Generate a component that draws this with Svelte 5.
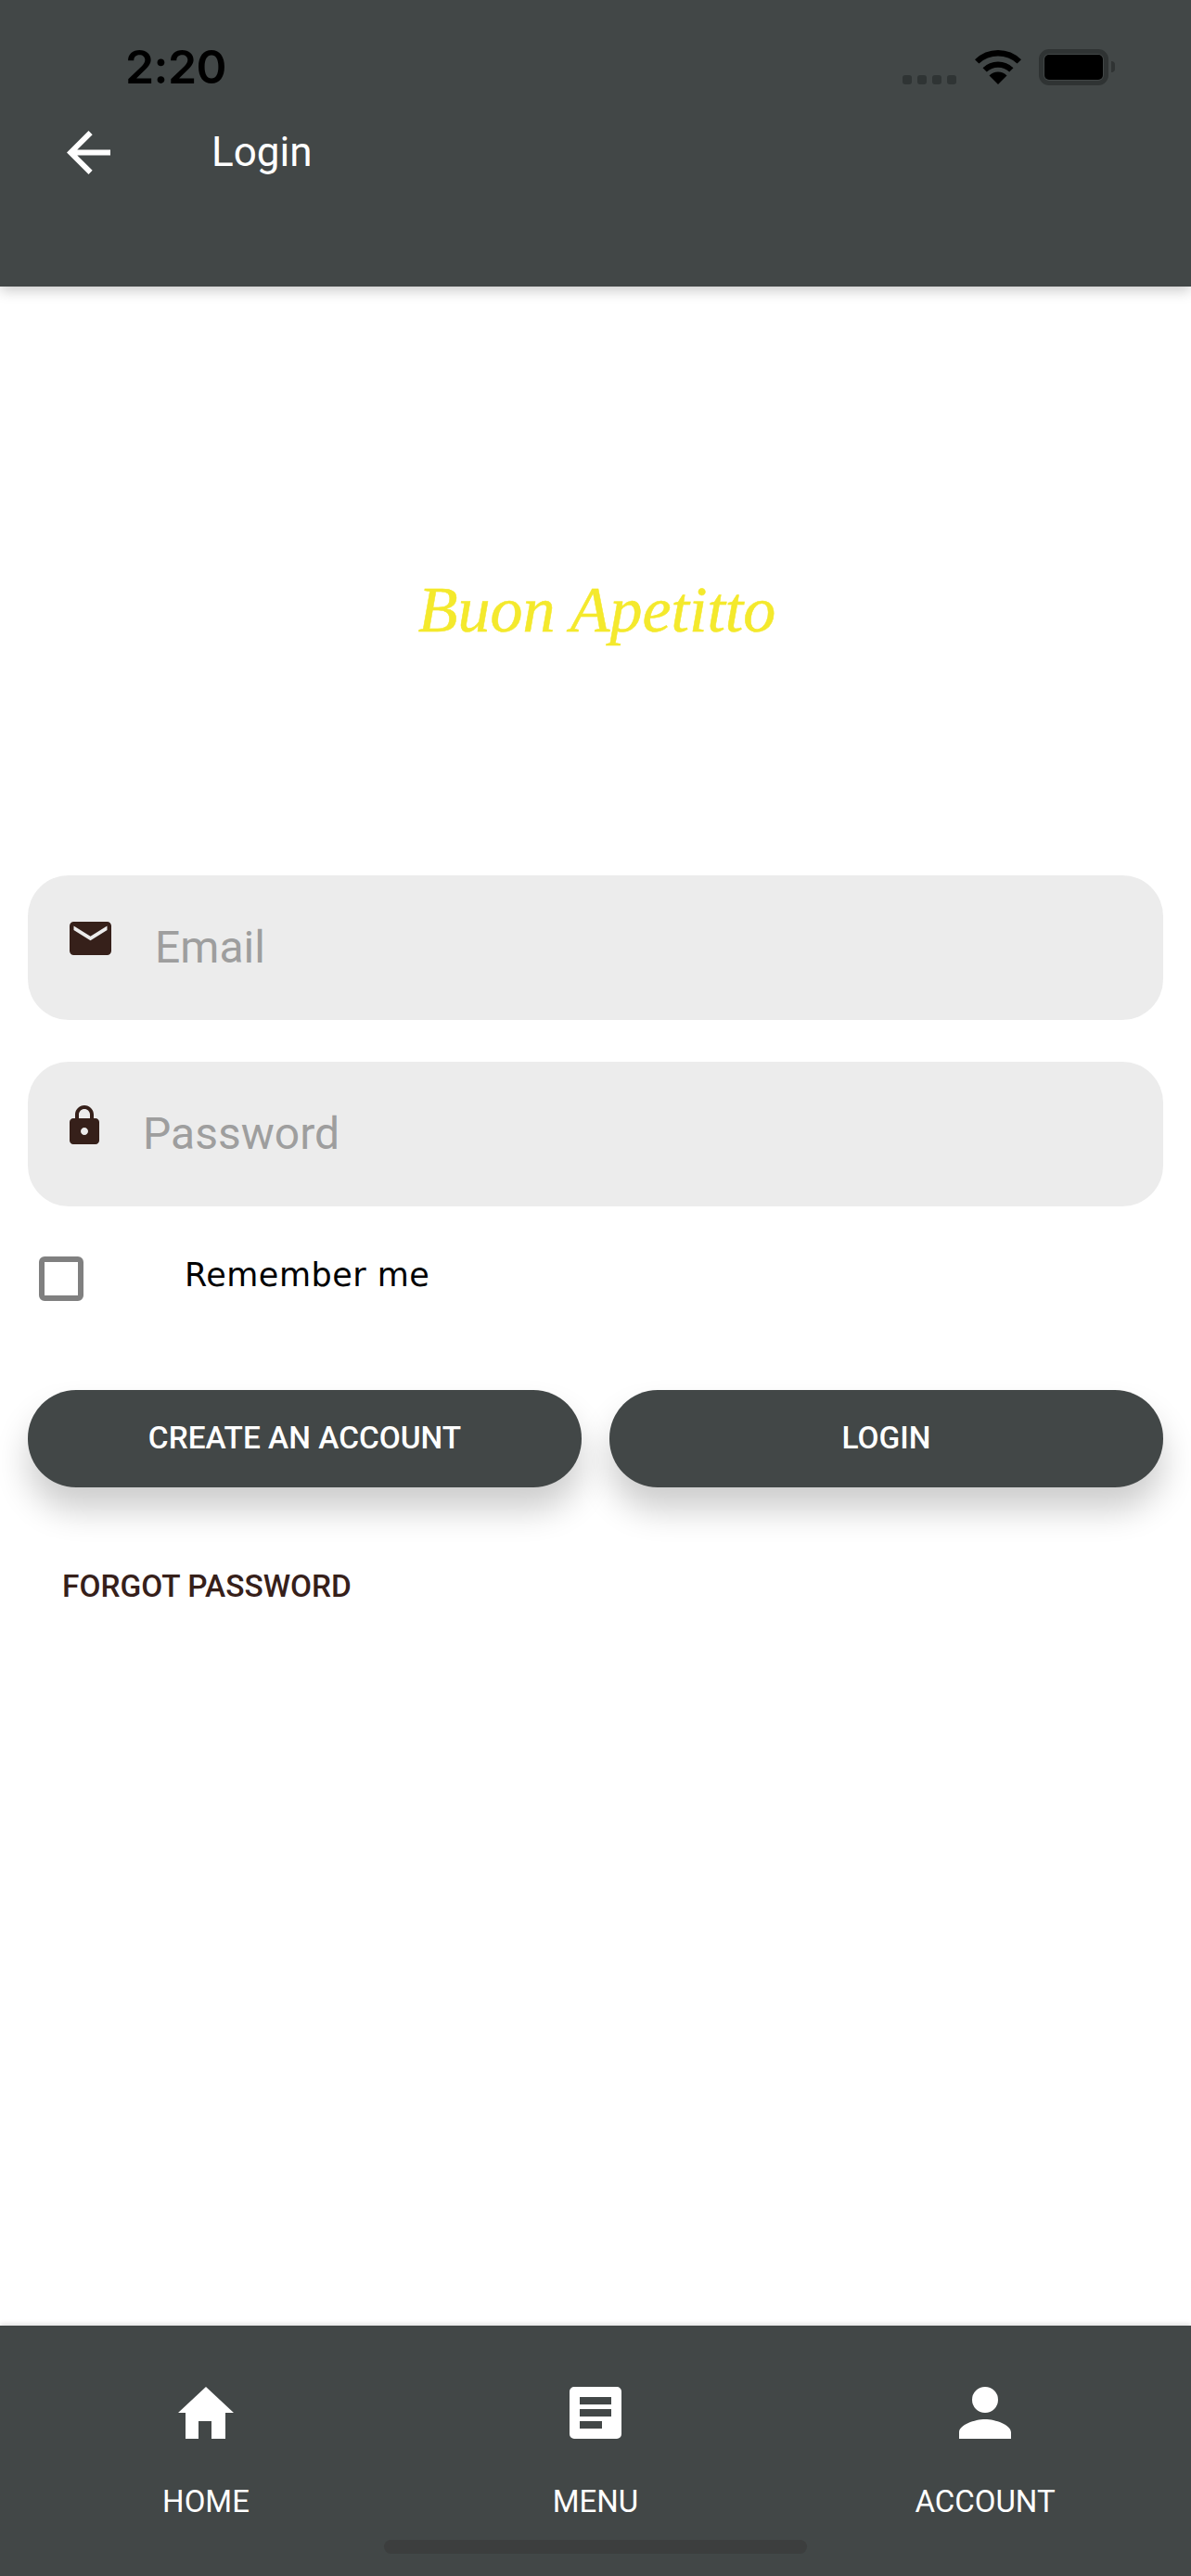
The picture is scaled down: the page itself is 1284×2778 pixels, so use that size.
<script>
	// tabs along the bottom, each icon is drawn in its own pixel box
	const tabs = [
		{
			label: 'HOME',
			width: 60,
			path: 'M22 56V37h14v19h15V28h9L30 0 0 28h8v28z'
		},
		{
			label: 'MENU',
			width: 56,
			path: 'M5 0h46a5 5 0 0 1 5 5v46a5 5 0 0 1-5 5H5a5 5 0 0 1-5-5V5a5 5 0 0 1 5-5zM11 11v8h34v-8zM11 24v8h34v-8zM11 37v8h24v-8z'
		},
		{
			label: 'ACCOUNT',
			width: 56,
			path: 'M28 28a14 14 0 1 0 0-28 14 14 0 0 0 0 28zM0 56v-7c0-8 17-14 28-14s28 6 28 14v7z'
		}
	];

	let remember = false;
</script>

<div class="screen">
	<header class="top">
		<div class="status">
			<span class="time">2:20</span>
			<div class="status-icons">
				<div class="signal"><i></i><i></i><i></i><i></i></div>
				<svg class="wifi" viewBox="0 0 50 37">
					<path d="M25 37 15.5 27.5a13.5 13.5 0 0 1 19 0z" fill="#000" />
					<path d="M25 12.5a24 24 0 0 0-16.500 6.700l4.300 4.300a18 18 0 0 1 24.400 0l4.300-4.300A24 24 0 0 0 25 12.500z" fill="#000" />
					<path d="M25 0A36 36 0 0 0 0 10.200l4.400 4.400a30 30 0 0 1 41.200 0l4.400-4.400A36 36 0 0 0 25 0z" fill="#000" />
				</svg>
				<div class="battery"><div class="battery-fill"></div></div>
				<div class="battery-nub"></div>
			</div>
		</div>
		<div class="titlebar">
			<svg class="back" viewBox="4 4 16 16">
				<path d="M20 11H7.830l5.590-5.590L12 4l-8 8 8 8 1.410-1.410L7.830 13H20v-2z" fill="#fff" />
			</svg>
			<span class="title">Login</span>
		</div>
	</header>

	<main class="content">
		<div class="logo">Buon Apetitto</div>

		<label class="field">
			<svg class="icon-mail" viewBox="2 4 20 16">
				<path d="M20 4H4c-1.100 0-1.990.9-1.990 2L2 18c0 1.100.9 2 2 2h16c1.100 0 2-.9 2-2V6c0-1.100-.9-2-2-2zm0 4-8 5-8-5V6l8 5 8-5v2z" fill="#36201a" />
			</svg>
			<input type="text" placeholder="Email" />
		</label>

		<label class="field second">
			<svg class="icon-lock" viewBox="4 1 16 21">
				<path d="M18 8h-1V6c0-2.760-2.240-5-5-5S7 3.240 7 6v2H6c-1.100 0-2 .9-2 2v10c0 1.100.9 2 2 2h12c1.100 0 2-.9 2-2V10c0-1.100-.9-2-2-2zm-6 9c-1.100 0-2-.9-2-2s.9-2 2-2 2 .9 2 2-.9 2-2 2zM9 8V6c0-1.660 1.340-3 3-3s3 1.340 3 3v2H9z" fill="#36201a" />
			</svg>
			<input class="pass" type="password" placeholder="Password" />
		</label>

		<label class="remember">
			<input type="checkbox" bind:checked={remember} />
			<span class="box"></span>
			<span class="remember-text">Remember me</span>
		</label>

		<div class="buttons">
			<button class="pill">CREATE AN ACCOUNT</button>
			<button class="pill">LOGIN</button>
		</div>

		<button class="forgot">FORGOT PASSWORD</button>
	</main>

	<nav class="tabbar">
		{#each tabs as tab}
			<button class="tab">
				<svg width={tab.width} height="56" viewBox="0 0 {tab.width} 56">
					<path d={tab.path} fill="#fff" fill-rule="evenodd" />
				</svg>
				<span class="tab-label">{tab.label}</span>
			</button>
		{/each}
		<div class="home-indicator"></div>
	</nav>
</div>

<style>
	:global(body) {
		margin: 0;
		background: #fff;
	}

	.screen {
		width: 1284px;
		height: 2778px;
		display: flex;
		flex-direction: column;
		font-family: Roboto, 'Liberation Sans', sans-serif;
		overflow: hidden;
	}

	.top {
		height: 309px;
		flex: none;
		box-sizing: border-box;
		background: #424747;
		box-shadow: 0 4px 14px rgba(0, 0, 0, 0.22);
		position: relative;
		z-index: 1;
	}

	.status {
		height: 126px;
		box-sizing: border-box;
		padding: 44px 82px 0 135px;
		display: flex;
		justify-content: space-between;
		align-items: flex-start;
	}

	.time {
		font-family: Inter, sans-serif;
		font-size: 50px;
		line-height: 56px;
		font-weight: 600;
		letter-spacing: -0.6px;
		color: #000;
	}

	.status-icons {
		display: flex;
		align-items: flex-start;
		padding-top: 9px;
	}

	.signal {
		display: flex;
		gap: 6px;
		margin-top: 28px;
		margin-right: 20px;
	}

	.signal i {
		display: block;
		width: 10px;
		height: 10px;
		border-radius: 3px;
		background: #2f3434;
	}

	.wifi {
		width: 50px;
		height: 37px;
		margin-top: 1px;
		margin-right: 19px;
	}

	.battery {
		width: 75px;
		height: 39px;
		box-sizing: border-box;
		border: 5px solid #2f3333;
		border-radius: 11px;
		padding: 1px;
	}

	.battery-fill {
		width: 100%;
		height: 100%;
		background: #000;
		border-radius: 5px;
	}

	.battery-nub {
		width: 4px;
		height: 12px;
		margin-top: 13px;
		margin-left: 3px;
		background: #2f3333;
		border-radius: 0 6px 6px 0;
	}

	.titlebar {
		display: flex;
		align-items: center;
		padding-left: 72px;
		height: 76px;
	}

	.back {
		width: 47px;
		height: 47px;
		flex: none;
	}

	.title {
		margin-left: 109px;
		font-size: 44px;
		color: #fff;
	}

	.content {
		flex: 1;
		padding: 0 30px;
		min-height: 0;
	}

	.logo {
		height: 635px;
		box-sizing: border-box;
		padding-top: 309px;
		text-align: center;
		font-family: 'Liberation Serif', serif;
		font-style: italic;
		font-size: 70px;
		line-height: 80px;
		padding-left: 3px;
		color: #f4e92c;
		-webkit-text-stroke: 0.5px #f4e92c;
	}

	.field {
		display: flex;
		align-items: flex-start;
		height: 156px;
		background: #ececec;
		border-radius: 44px;
		padding-left: 45px;
		box-sizing: border-box;
	}

	.second {
		margin-top: 45px;
	}

	.icon-mail {
		width: 45px;
		height: 36px;
		margin-top: 50px;
		flex: none;
	}

	.icon-lock {
		width: 32px;
		height: 42px;
		margin-top: 47px;
		flex: none;
	}

	.field input {
		flex: 1;
		min-width: 0;
		height: 154px;
		box-sizing: border-box;
		border: 0;
		outline: 0;
		background: transparent;
		margin-left: 47px;
		padding: 0;
		font-family: inherit;
		font-size: 48px;
		color: #333;
	}

	.field input.pass {
		margin-left: 47px;
	}

	.field input::placeholder {
		color: #9e9e9e;
		opacity: 1;
	}

	.remember {
		display: flex;
		align-items: flex-start;
		height: 198px;
		padding: 54px 0 0 12px;
		box-sizing: border-box;
	}

	.remember input {
		display: none;
	}

	.box {
		width: 48px;
		height: 48px;
		box-sizing: border-box;
		border: 6px solid #808080;
		border-radius: 6px;
		flex: none;
	}

	.remember-text {
		margin-left: 109px;
		margin-top: -2px;
		font-family: 'DejaVu Sans', sans-serif;
		font-size: 35px;
		line-height: 44px;
		letter-spacing: 0.5px;
		color: #000;
	}

	.buttons {
		display: flex;
		gap: 30px;
	}

	.pill {
		flex: 1;
		height: 105px;
		border: 0;
		border-radius: 52px;
		background: #424747;
		color: #fff;
		font-family: inherit;
		font-size: 33.4px;
		font-weight: 500;
		padding: 0 0 2px;
		box-shadow: 0 24px 36px rgba(0, 0, 0, 0.2);
	}

	.forgot {
		display: block;
		margin: 88px 0 0 37px;
		padding: 0;
		border: 0;
		background: none;
		color: #36201a;
		font-family: inherit;
		font-size: 33.4px;
		line-height: 38px;
		font-weight: 500;
	}

	.tabbar {
		flex: none;
		height: 270px;
		background: #424747;
		display: grid;
		grid-template-columns: repeat(3, 1fr);
		padding: 0 12px;
		box-sizing: border-box;
		position: relative;
		box-shadow: 0 -2px 5px rgba(0, 0, 0, 0.12);
	}

	.tab {
		border: 0;
		background: none;
		padding: 66px 0 0;
		color: #fff;
		font-family: inherit;
		display: flex;
		flex-direction: column;
		align-items: center;
		justify-content: flex-start;
	}

	.tab svg {
		display: block;
	}

	.tab-label {
		margin-top: 49px;
		font-size: 33px;
		line-height: 38px;
	}

	.home-indicator {
		position: absolute;
		left: 414px;
		bottom: 24px;
		width: 456px;
		height: 15px;
		border-radius: 8px;
		background: #3c3e3e;
	}
</style>
